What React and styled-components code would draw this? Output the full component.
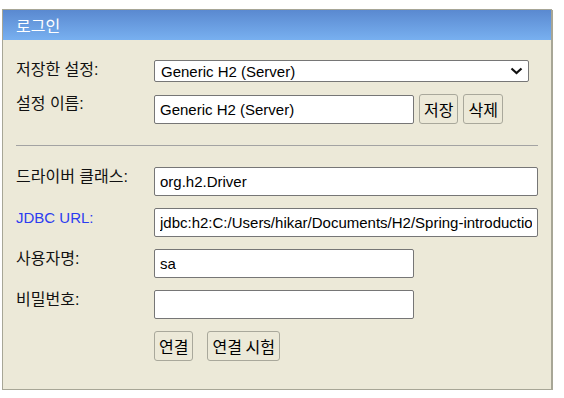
import React from 'react';
import styled, { createGlobalStyle } from 'styled-components';

const GlobalStyle = createGlobalStyle`
  body {
    margin: 0;
    background: #ffffff;
    font-family: 'Liberation Sans', 'Noto Sans CJK KR', sans-serif;
  }
`;

const Page = styled.div`
  padding: 9px 0 0 2px;
`;

const Panel = styled.div`
  box-sizing: border-box;
  width: 550px;
  background: #ece9d8;
  border: 1px solid #a7a696;
  box-shadow: 1px 1px 0 #a7a696;
`;

const Header = styled.div`
  height: 30px;
  padding-left: 13px;
  display: flex;
  align-items: center;
  background: linear-gradient(to bottom, #5a89d0, #78b0f0);
  color: #ffffff;
  font-size: 16px;
`;

const Body = styled.div`
  display: flex;
  flex-direction: column;
  gap: 12px;
  padding: 20px 13px 28px;
`;

const Row = styled.div`
  display: grid;
  grid-template-columns: 138px 1fr;
  align-items: start;
`;

const Label = styled.span`
  font-size: ${(p) => (p.$link ? '15px' : '16px')};
  line-height: 20px;
  color: ${(p) => (p.$link ? '#2b3cf0' : '#111111')};
`;

const Fields = styled.div`
  display: flex;
  align-items: center;
  gap: ${(p) => p.$gap || 5}px;
`;

const SelectWrap = styled.div`
  position: relative;
  width: 375px;
  height: 22px;
`;

const Select = styled.select`
  box-sizing: border-box;
  width: 100%;
  height: 100%;
  padding: 0 6px;
  border: 1px solid #767676;
  border-radius: 2px;
  background: #ffffff;
  color: #000000;
  font-family: 'Liberation Sans', 'Noto Sans CJK KR', sans-serif;
  font-size: 15px;
  appearance: none;
  outline: none;
`;

const Chevron = styled.svg`
  position: absolute;
  right: 6px;
  top: 7px;
  pointer-events: none;
`;

const Input = styled.input`
  box-sizing: border-box;
  width: ${(p) => (p.$short ? '260px' : '100%')};
  height: 29px;
  padding: 0 5px;
  border: 1px solid #767676;
  border-radius: 2px;
  background: #ffffff;
  color: #000000;
  font-family: 'Liberation Sans', 'Noto Sans CJK KR', sans-serif;
  font-size: 15px;
  outline: none;
`;

const Button = styled.button`
  box-sizing: border-box;
  height: 30px;
  padding: 0 4px;
  border: 1px solid #a9a89b;
  border-radius: 3px;
  background: #ece9d8;
  color: #000000;
  font-family: 'Noto Sans CJK KR', sans-serif;
  font-size: 16px;
`;

const Divider = styled.hr`
  margin: 9px 0;
  border: none;
  height: 1px;
  background: #a3a3a3;
`;

export default function App() {
  return (
    <Page>
      <GlobalStyle />
      <Panel>
        <Header>로그인</Header>
        <Body>
          <Row>
            <Label>저장한 설정:</Label>
            <SelectWrap>
              <Select defaultValue="Generic H2 (Server)">
                <option>Generic H2 (Server)</option>
              </Select>
              <Chevron width="13" height="8" viewBox="0 0 13 8">
                <path d="M1.5 1.5 L6.5 6 L11.5 1.5" fill="none" stroke="#111" strokeWidth="2.2" />
              </Chevron>
            </SelectWrap>
          </Row>
          <Row>
            <Label>설정 이름:</Label>
            <Fields>
              <Input $short defaultValue="Generic H2 (Server)" />
              <Button>저장</Button>
              <Button>삭제</Button>
            </Fields>
          </Row>
          <Divider />
          <Row>
            <Label>드라이버 클래스:</Label>
            <Input defaultValue="org.h2.Driver" />
          </Row>
          <Row>
            <Label $link>JDBC URL:</Label>
            <Input defaultValue="jdbc:h2:C:/Users/hikar/Documents/H2/Spring-introduction" />
          </Row>
          <Row>
            <Label>사용자명:</Label>
            <Input $short defaultValue="sa" />
          </Row>
          <Row>
            <Label>비밀번호:</Label>
            <Input $short type="password" defaultValue="" />
          </Row>
          <Row>
            <span />
            <Fields $gap={14}>
              <Button>연결</Button>
              <Button>연결 시험</Button>
            </Fields>
          </Row>
        </Body>
      </Panel>
    </Page>
  );
}
